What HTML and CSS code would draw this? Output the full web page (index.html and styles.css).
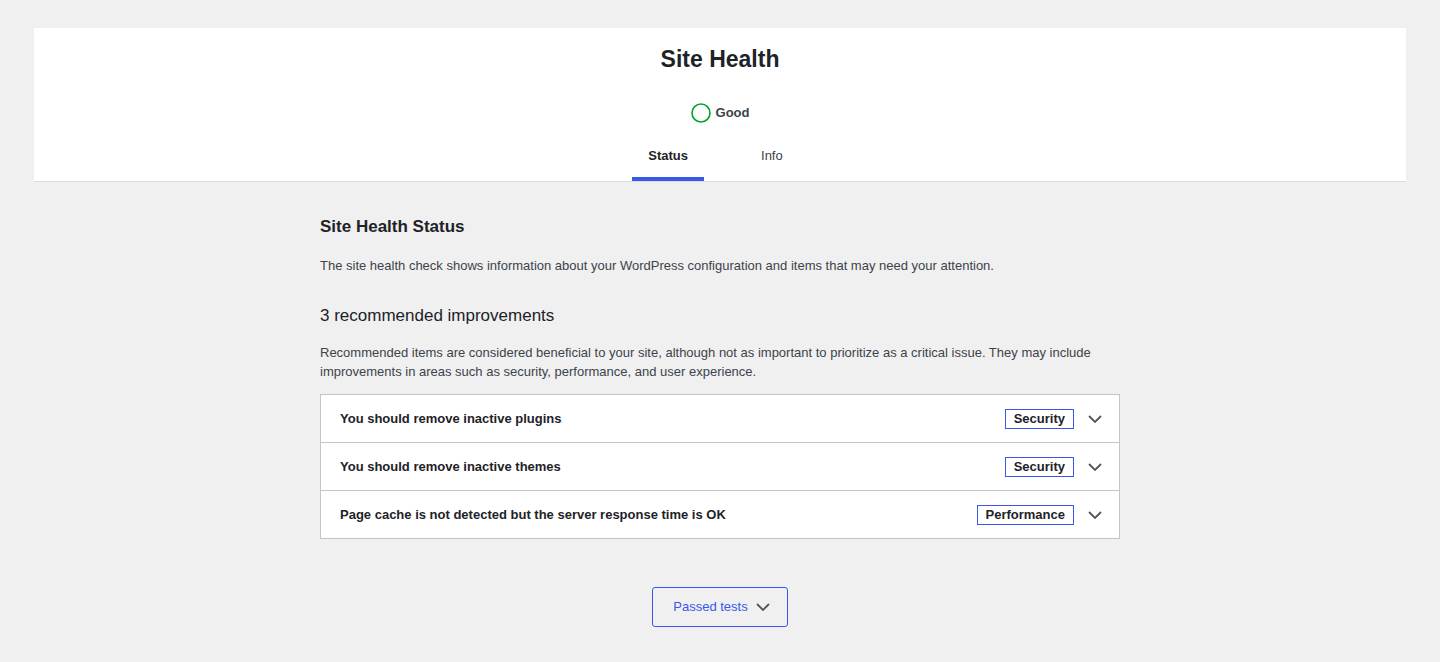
FILE: index.html
```html
<!DOCTYPE html>
<html lang="en">
<head>
<meta charset="UTF-8">
<meta name="viewport" content="width=device-width, initial-scale=1.0">
<title>Site Health</title>
<link rel="stylesheet" href="styles.css">
</head>
<body>
<div class="wrap">
  <div class="health-header">
    <h1>Site Health</h1>
    <div class="score">
      <svg width="20" height="20" viewBox="0 0 20 20"><circle cx="10" cy="10" r="9" fill="none" stroke="#00a32a" stroke-width="1.6"/></svg>
      <span>Good</span>
    </div>
    <nav class="tabs">
      <a class="tab active" href="#">Status</a>
      <a class="tab" href="#">Info</a>
    </nav>
  </div>

  <div class="health-body">
    <h2>Site Health Status</h2>
    <p class="intro">The site health check shows information about your WordPress configuration and items that may need your attention.</p>

    <h3>3 recommended improvements</h3>
    <p class="desc">Recommended items are considered beneficial to your site, although not as important to prioritize as a critical issue. They may include improvements in areas such as security, performance, and user experience.</p>

    <div class="accordion">
      <div class="item">
        <span class="item-title">You should remove inactive plugins</span>
        <span class="badge">Security</span>
        <svg class="chev" width="14" height="8" viewBox="0 0 14 8"><polyline points="1,1 7,7 13,1" fill="none" stroke="#50575e" stroke-width="1.8"/></svg>
      </div>
      <div class="item">
        <span class="item-title">You should remove inactive themes</span>
        <span class="badge">Security</span>
        <svg class="chev" width="14" height="8" viewBox="0 0 14 8"><polyline points="1,1 7,7 13,1" fill="none" stroke="#50575e" stroke-width="1.8"/></svg>
      </div>
      <div class="item">
        <span class="item-title">Page cache is not detected but the server response time is OK</span>
        <span class="badge">Performance</span>
        <svg class="chev" width="14" height="8" viewBox="0 0 14 8"><polyline points="1,1 7,7 13,1" fill="none" stroke="#50575e" stroke-width="1.8"/></svg>
      </div>
    </div>

    <div class="passed">
      <button class="passed-btn">Passed tests
        <svg width="14" height="8" viewBox="0 0 14 8"><polyline points="1,1 7,7 13,1" fill="none" stroke="#50575e" stroke-width="1.8"/></svg>
      </button>
    </div>
  </div>
</div>
</body>
</html>
```

FILE: styles.css
```css
body {
  margin: 0;
  background-color: #f0f0f1;
  color: #3c434a;
  font-family: "Liberation Sans", Arial, sans-serif;
  font-size: 13px;
  line-height: 1.5;
}
.wrap {
  padding: 28px 34px 0;
}
.health-header {
  background: #fff;
  border-bottom: 1px solid #dcdcde;
  display: flex;
  flex-direction: column;
  align-items: center;
}
.health-header h1 {
  margin: 0;
  padding-top: 16px;
  font-size: 23px;
  line-height: 30px;
  font-weight: 600;
  color: #1d2327;
}
.score {
  margin-top: 29px;
  display: flex;
  align-items: center;
  gap: 5px;
  height: 20px;
  font-weight: 600;
  color: #3c434a;
}
.score svg {
  display: block;
}
.tabs {
  display: grid;
  grid-template-columns: 1fr 1fr;
  margin-top: 15px;
}
.tab {
  display: block;
  margin: 0 16px;
  padding: 8px 16px 11px;
  line-height: 20px;
  text-align: center;
  color: #3c434a;
  text-decoration: none;
  border-bottom: 4px solid transparent;
}
.tab.active {
  font-weight: 600;
  color: #1d2327;
  border-bottom-color: #3858e9;
}
.health-body {
  width: 800px;
  margin: 0 auto;
}
.health-body h2 {
  margin: 33px 0 0;
  font-size: 17px;
  line-height: 24px;
  font-weight: 600;
  color: #1d2327;
}
.intro {
  margin: 17px 0 0;
  line-height: 19.5px;
}
.health-body h3 {
  margin: 28px 0 0;
  font-size: 17px;
  line-height: 24px;
  font-weight: 400;
  color: #1d2327;
}
.desc {
  margin: 15px 0 0;
  line-height: 19.5px;
}
.accordion {
  margin-top: 12px;
  background: #fff;
  border: 1px solid #c3c4c7;
}
.item {
  display: flex;
  align-items: center;
  height: 46px;
  padding: 1px 17px 0 19px;
  border-top: 1px solid #c3c4c7;
}
.item:first-child {
  border-top: none;
}
.item-title {
  flex: 1;
  font-weight: 600;
  color: #1d2327;
}
.badge {
  border: 1px solid #3858e9;
  padding: 0 8px;
  line-height: 18px;
  font-weight: 600;
  color: #1d2327;
  margin-right: 14px;
}
.chev {
  display: block;
}
.passed {
  display: flex;
  justify-content: center;
  margin-top: 48px;
}
.passed-btn {
  display: flex;
  align-items: center;
  gap: 8px;
  height: 40px;
  padding: 0 17px 0 20px;
  background: transparent;
  border: 1px solid #3858e9;
  border-radius: 3px;
  color: #3858e9;
  font-family: inherit;
  font-size: 13px;
  cursor: pointer;
}
```
